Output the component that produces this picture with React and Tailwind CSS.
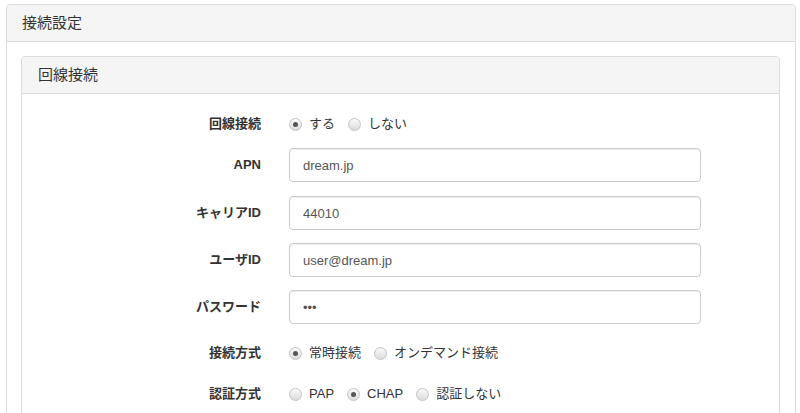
import React from "react";

function Radio({ checked, label }) {
  return (
    <label className="flex items-center">
      <span className="relative flex h-[13px] w-[13px] items-center justify-center rounded-full border border-[#c4c4c4] bg-gradient-to-b from-[#fafafa] to-[#dcdcdc]">
        {checked && <span className="h-[5px] w-[5px] rounded-full bg-[#555]" />}
      </span>
      <span className="ml-[7px] mr-[13px] text-[13px] text-[#333]">{label}</span>
    </label>
  );
}

function Row({ label, children, className }) {
  return (
    <div className={"flex items-center " + className}>
      <div className="w-[239px] text-right text-[13px] font-bold text-[#333]">{label}</div>
      <div className="ml-[28px] flex items-center">{children}</div>
    </div>
  );
}

function TextInput({ value, type = "text" }) {
  return (
    <input
      type={type}
      defaultValue={value}
      readOnly
      className="h-[34px] w-[412px] rounded-[4px] border border-[#ccc] bg-white px-[13px] text-[13px] text-[#555] shadow-[inset_0_1px_1px_rgba(0,0,0,0.075)] outline-none"
    />
  );
}

export default function App() {
  return (
    <div className="min-h-[413px] bg-white font-['Liberation_Sans','Noto_Sans_CJK_JP',sans-serif] text-[#333]">
      <div className="ml-[6px] mt-[4px] w-[790px] rounded-[4px] border border-[#ddd] bg-white">
        <div className="flex h-[37px] items-center rounded-t-[4px] border-b border-[#ddd] bg-[#f5f5f5] px-[15px] text-[15px] text-[#333]">
          接続設定
        </div>
        <div className="pb-[20px] pl-[14px] pr-[15px] pt-[14px]">
          <div className="rounded-[4px] border border-[#ddd] bg-white">
            <div className="flex h-[37px] items-center rounded-t-[4px] border-b border-[#ddd] bg-[#f5f5f5] px-[16px] text-[15px] text-[#333]">
              回線接続
            </div>
            <div className="pb-[20px] pt-[15px]">
              <Row label="回線接続" className="h-[30px]">
                <Radio checked label="する" />
                <Radio label="しない" />
              </Row>
              <Row label="APN" className="mt-[9px] h-[34px]">
                <TextInput value="dream.jp" />
              </Row>
              <Row label="キャリアID" className="mt-[14px] h-[34px]">
                <TextInput value="44010" />
              </Row>
              <Row label="ユーザID" className="mt-[13px] h-[34px]">
                <TextInput value="user@dream.jp" />
              </Row>
              <Row label="パスワード" className="mt-[13px] h-[34px]">
                <TextInput value="abc" type="password" />
              </Row>
              <Row label="接続方式" className="mt-[14px] h-[30px]">
                <Radio checked label="常時接続" />
                <Radio label="オンデマンド接続" />
              </Row>
              <Row label="認証方式" className="mt-[11px] h-[30px]">
                <Radio label="PAP" />
                <Radio checked label="CHAP" />
                <Radio label="認証しない" />
              </Row>
              <div className="h-[40px]" />
            </div>
          </div>
        </div>
      </div>
    </div>
  );
}
